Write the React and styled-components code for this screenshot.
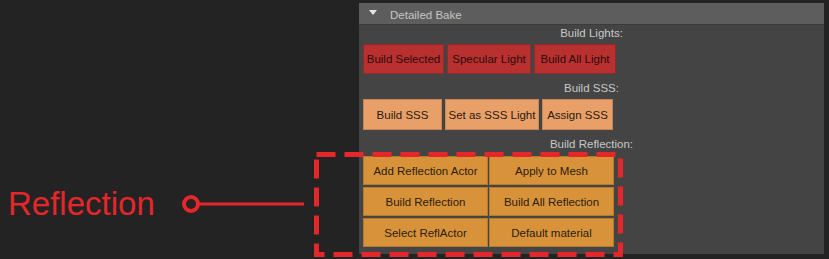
import React from 'react'
import styled, { createGlobalStyle } from 'styled-components'

const GlobalStyle = createGlobalStyle`
  html, body {
    margin: 0;
    padding: 0;
    background: #232323;
  }
  body {
    font-family: "Liberation Sans", Arial, sans-serif;
  }
`

const Page = styled.div`
  position: relative;
  width: 829px;
  height: 259px;
  overflow: hidden;
  background: #232323;
`

const Panel = styled.div`
  margin-left: 359px;
  margin-top: 3px;
  width: 465px;
  background: #444444;
  display: flex;
  flex-direction: column;
`

const Header = styled.div`
  height: 22px;
  background: #5d5d5d;
  border-bottom: 1px solid #3b3b3b;
  display: flex;
  align-items: center;
  padding: 2px 0 0 10px;
  box-sizing: border-box;
  gap: 13px;
  color: #c6c6c6;
  font-size: 11.5px;
`

const Arrow = styled.span`
  width: 0;
  height: 0;
  margin-top: -4px;
  border-left: 4px solid transparent;
  border-right: 4px solid transparent;
  border-top: 5px solid #e4e4e4;
`

const Body = styled.div`
  display: flex;
  flex-direction: column;
  padding: 0 0 7px 4px;
`

const Label = styled.div`
  height: 16px;
  line-height: 16px;
  margin: ${p => p.$top}px 0 ${p => p.$bottom}px -4px;
  text-align: center;
  font-size: 11.5px;
  color: #c8c8c8;
`

const Row = styled.div`
  display: flex;
  gap: 3px;
`

const palettes = {
  red: { bg: '#b83130', fg: '#2b0b0b', border: '#8f2a2a' },
  sss: { bg: '#e9a068', fg: '#2a1a10', border: '#c48656' },
  refl: { bg: '#d8933a', fg: '#2a1d10', border: '#b47a30' },
}

const Button = styled.button`
  width: ${p => p.$w}px;
  height: ${p => p.$h || 30}px;
  padding: 0;
  box-sizing: border-box;
  border: 1px solid ${p => palettes[p.$kind].border};
  background: ${p => palettes[p.$kind].bg};
  color: ${p => palettes[p.$kind].fg};
  font-family: "Liberation Sans", Arial, sans-serif;
  font-size: 11.5px;
  white-space: nowrap;
  cursor: pointer;
`

const Grid = styled.div`
  display: grid;
  grid-template-columns: 125px 125px;
  grid-auto-rows: 29px;
  gap: 2px 1px;
`

const Callout = styled.div`
  position: absolute;
  left: 8px;
  top: 187px;
  font-size: 33px;
  line-height: 33px;
  color: #e5262a;
`

const Connector = styled.svg`
  position: absolute;
  left: 180px;
  top: 194px;
`

const DashedBox = styled.svg`
  position: absolute;
  left: 314px;
  top: 152px;
`

const lights = [
  ['Build Selected', 81],
  ['Specular Light', 84],
  ['Build All Light', 82],
]

const sss = [
  ['Build SSS', 79],
  ['Set as SSS Light', 94],
  ['Assign SSS', 71],
]

const reflection = [
  'Add Reflection Actor',
  'Apply to Mesh',
  'Build Reflection',
  'Build All Reflection',
  'Select ReflActor',
  'Default material',
]

export default function App() {
  return (
    <Page>
      <GlobalStyle />
      <Panel>
        <Header>
          <Arrow />
          <span>Detailed Bake</span>
        </Header>
        <Body>
          <Label $top={0} $bottom={3}>Build Lights:</Label>
          <Row>
            {lights.map(([t, w]) => (
              <Button key={t} $kind="red" $w={w}>{t}</Button>
            ))}
          </Row>
          <Label $top={6} $bottom={3}>Build SSS:</Label>
          <Row>
            {sss.map(([t, w]) => (
              <Button key={t} $kind="sss" $w={w} $h={31}>{t}</Button>
            ))}
          </Row>
          <Label $top={6} $bottom={4}>Build Reflection:</Label>
          <Grid>
            {reflection.map(t => (
              <Button key={t} $kind="refl" $w={125} $h={29}>{t}</Button>
            ))}
          </Grid>
        </Body>
      </Panel>

      {/* annotation overlay */}
      <Callout>Reflection</Callout>
      <Connector width="125" height="20">
        <line x1="19" y1="10" x2="124" y2="10" stroke="#e5262a" strokeWidth="3" />
        <circle cx="11" cy="10" r="7" fill="#232323" stroke="#e5262a" strokeWidth="4" />
      </Connector>
      <DashedBox width="310" height="106">
        <rect x="2.5" y="2.5" width="304" height="100" fill="none"
          stroke="#e5262a" strokeWidth="5" strokeDasharray="19 9" />
      </DashedBox>
    </Page>
  )
}
